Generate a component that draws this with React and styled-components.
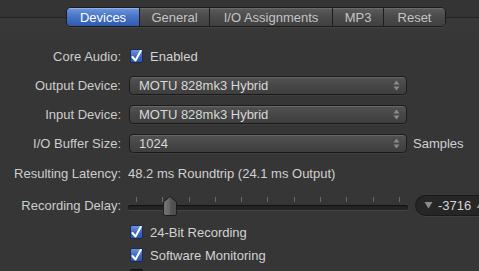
import React from 'react';
import styled, { createGlobalStyle } from 'styled-components';

const GlobalStyle = createGlobalStyle`
  html, body {
    margin: 0;
    padding: 0;
    background: #363636;
    overflow: hidden;
  }
  body {
    font-family: "Liberation Sans", Arial, Helvetica, sans-serif;
    font-size: 13px;
    color: #cfcfcf;
  }
`;

const Page = styled.div`
  width: 479px;
  height: 271px;
  overflow: hidden;
  background: #363636;
`;

const Header = styled.div`
  height: 42px;
  box-sizing: border-box;
  padding: 7px 0 0 66px;
  display: flex;
  align-items: flex-start;
  background: linear-gradient(
    to bottom,
    #343434 0,
    #343434 17px,
    #232323 17px,
    #232323 18px,
    #393939 18px,
    #363636 42px
  );
`;

const TabBar = styled.div`
  display: flex;
  height: 20px;
  border-radius: 5px;
  border: 1px solid #1b1b1b;
  box-sizing: border-box;
  overflow: hidden;
  box-shadow: 0 1px 0 rgba(255, 255, 255, 0.06);
`;

const Tab = styled.div`
  width: ${({ w }) => w}px;
  display: flex;
  align-items: center;
  justify-content: center;
  font-size: 13px;
  color: ${({ active }) => (active ? '#ffffff' : '#c4c4c4')};
  background: ${({ active }) =>
    active
      ? 'linear-gradient(to bottom, #6f97de 0%, #4672c4 50%, #2f5aad 100%)'
      : 'linear-gradient(to bottom, #5c5c5c 0%, #4a4a4a 50%, #404040 100%)'};
  box-shadow: inset 0 1px 0 rgba(255, 255, 255, ${({ active }) => (active ? 0.25 : 0.1)});
  & + & {
    border-left: 1px solid #1e1e1e;
  }
`;

const Form = styled.div`
  display: flex;
  flex-direction: column;
`;

const Row = styled.div`
  height: ${({ h }) => h}px;
  display: flex;
  align-items: center;
`;

const Label = styled.div`
  width: 121px;
  text-align: right;
  color: #cdcdcd;
  white-space: nowrap;
  flex-shrink: 0;
`;

const Control = styled.div`
  margin-left: ${({ ml }) => ml ?? 8}px;
  display: flex;
  align-items: center;
  white-space: nowrap;
`;

const Check = styled.div`
  width: 13px;
  height: 14px;
  box-sizing: border-box;
  border-radius: 2px;
  border: 1px solid ${({ on }) => (on ? '#1c2b4d' : '#111')};
  background: ${({ on }) =>
    on ? 'linear-gradient(to bottom, #6a93dc 0%, #3a65bb 60%, #2b55a8 100%)' : '#1d1d1d'};
  display: flex;
  align-items: center;
  justify-content: center;
  margin-left: 1px;
  flex-shrink: 0;
`;

const CheckText = styled.span`
  margin-left: 7px;
  color: #d2d2d2;
`;

const Select = styled.div`
  width: 278px;
  height: 19px;
  box-sizing: border-box;
  border: 1px solid #1b1b1b;
  border-radius: 4px;
  background: linear-gradient(to bottom, #525252 0%, #474747 50%, #3e3e3e 100%);
  box-shadow: inset 0 1px 0 rgba(255, 255, 255, 0.12), 0 1px 0 rgba(255, 255, 255, 0.04);
  display: flex;
  align-items: center;
  justify-content: space-between;
  padding: 0 6px 0 9px;
  color: #d8d8d8;
`;

const Unit = styled.span`
  margin-left: 6px;
  color: #d0d0d0;
`;

const Value = styled.span`
  color: #d0d0d0;
`;

const Slider = styled.div`
  width: 280px;
  height: 20px;
  display: flex;
  flex-direction: column;
  justify-content: flex-end;
  position: relative;
`;

const Ticks = styled.div`
  display: flex;
  justify-content: space-between;
  padding: 0 8px;
  height: 5px;
  margin-bottom: 3px;
`;

const Tick = styled.span`
  width: 1px;
  height: 5px;
  background: #6a6a6a;
`;

const Track = styled.div`
  height: 5px;
  border-radius: 3px;
  background: #242424;
  box-shadow: inset 0 1px 1px rgba(0, 0, 0, 0.5), 0 1px 0 rgba(255, 255, 255, 0.07);
  margin-bottom: 5px;
`;

const Thumb = styled.svg`
  position: absolute;
  left: 35px;
  top: 1px;
`;

const Stepper = styled.div`
  margin-left: 7px;
  height: 21px;
  width: 80px;
  box-sizing: border-box;
  border-radius: 11px 0 0 11px;
  border: 1px solid #1a1a1a;
  border-right: none;
  background: #262626;
  box-shadow: 0 1px 0 rgba(255, 255, 255, 0.05);
  display: flex;
  align-items: center;
  padding-left: 8px;
  gap: 5px;
  color: #d6d6d6;
  font-size: 13px;
`;

const Arrows = () => (
  <svg width="7" height="11" viewBox="0 0 7 11">
    <path d="M3.5 0.5 L6.5 4.5 L0.5 4.5 Z" fill="#8a8a8a" />
    <path d="M3.5 10.5 L6.5 6.5 L0.5 6.5 Z" fill="#8a8a8a" />
  </svg>
);

const Tri = ({ down }) => (
  <svg width="9" height="8" viewBox="0 0 9 8">
    <path d={down ? 'M0.5 1 L8.5 1 L4.5 7.5 Z' : 'M0.5 7 L8.5 7 L4.5 0.5 Z'} fill="#8c8c8c" />
  </svg>
);

const Checkbox = ({ on }) => (
  <Check on={on}>
    {on && (
      <svg width="11" height="13" viewBox="0 0 11 13">
        <path
          d="M1.5 7 L4.5 10.5 L9.8 0.8"
          stroke="#ffffff"
          strokeWidth="2"
          fill="none"
          strokeLinecap="round"
          strokeLinejoin="round"
        />
      </svg>
    )}
  </Check>
);

const tabs = [
  { name: 'Devices', w: 72 },
  { name: 'General', w: 69 },
  { name: 'I/O Assignments', w: 122 },
  { name: 'MP3', w: 50 },
  { name: 'Reset', w: 61 },
];

export default function App() {
  return (
    <Page>
      <GlobalStyle />
      <Header>
        <TabBar>
          {tabs.map((t, i) => (
            <Tab key={t.name} w={t.w} active={i === 0}>
              {t.name}
            </Tab>
          ))}
        </TabBar>
      </Header>
      <Form>
        <Row h={28}>
          <Label>Core Audio:</Label>
          <Control>
            <Checkbox on />
            <CheckText>Enabled</CheckText>
          </Control>
        </Row>
        <Row h={30}>
          <Label>Output Device:</Label>
          <Control>
            <Select>
              MOTU 828mk3 Hybrid
              <Arrows />
            </Select>
          </Control>
        </Row>
        <Row h={28}>
          <Label>Input Device:</Label>
          <Control>
            <Select>
              MOTU 828mk3 Hybrid
              <Arrows />
            </Select>
          </Control>
        </Row>
        <Row h={30}>
          <Label>I/O Buffer Size:</Label>
          <Control>
            <Select>
              1024
              <Arrows />
            </Select>
            <Unit>Samples</Unit>
          </Control>
        </Row>
        <Row h={30}>
          <Label>Resulting Latency:</Label>
          <Control ml={7}>
            <Value>48.2 ms Roundtrip (24.1 ms Output)</Value>
          </Control>
        </Row>
        <Row h={34}>
          <Label>Recording Delay:</Label>
          <Control ml={7}>
            <Slider>
              <Ticks>
                {Array.from({ length: 11 }).map((_, i) => (
                  <Tick key={i} />
                ))}
              </Ticks>
              <Track />
              <Thumb width="14" height="20" viewBox="0 0 14 20">
                <defs>
                  <linearGradient id="thumbGrad" x1="0" y1="0" x2="1" y2="0">
                    <stop offset="0" stopColor="#767676" />
                    <stop offset="0.5" stopColor="#646464" />
                    <stop offset="0.5" stopColor="#555555" />
                    <stop offset="1" stopColor="#4c4c4c" />
                  </linearGradient>
                </defs>
                <path
                  d="M7 0.5 L13.5 6 L13.5 17.5 Q13.5 19.5 11.5 19.5 L2.5 19.5 Q0.5 19.5 0.5 17.5 L0.5 6 Z"
                  fill="url(#thumbGrad)"
                  stroke="#1c1c1c"
                />
              </Thumb>
            </Slider>
            <Stepper>
              <Tri down />
              -3716
              <Tri />
            </Stepper>
          </Control>
        </Row>
        <Row h={20}>
          <Label />
          <Control>
            <Checkbox on />
            <CheckText>24-Bit Recording</CheckText>
          </Control>
        </Row>
        <Row h={26}>
          <Label />
          <Control>
            <Checkbox on />
            <CheckText>Software Monitoring</CheckText>
          </Control>
        </Row>
        <Row h={16}>
          <Label />
          <Control>
            <Checkbox />
          </Control>
        </Row>
      </Form>
    </Page>
  );
}
